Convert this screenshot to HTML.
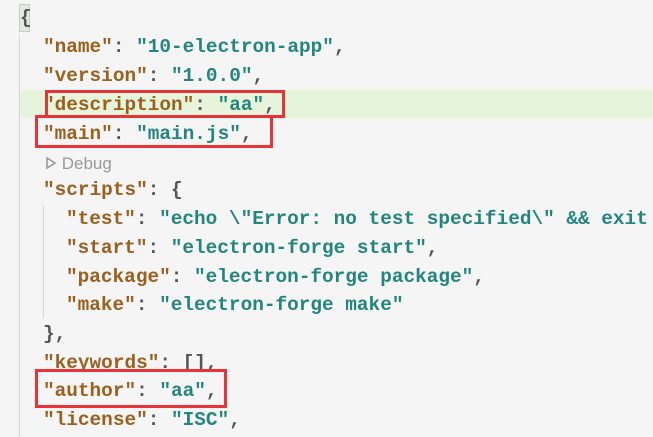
<!DOCTYPE html>
<html><head><style>
html,body{margin:0;padding:0;width:653px;height:437px;overflow:hidden;background:#f5f5f5;}
.code{position:absolute;left:0;top:0;font-family:"Liberation Mono",monospace;font-size:19.4px;font-weight:bold;white-space:pre;}
.l{position:absolute;height:29px;line-height:29px;margin-top:1px;}
.k{color:#9b5f1e}.s{color:#23867e}.p{color:#555}
.hl{position:absolute;left:20px;right:0;top:90px;height:28px;background:#e6f4dc;}
.box{position:absolute;border:3px solid #ea3338;box-sizing:border-box;}
.guide{position:absolute;width:1px;background:#d6d6d6;}
</style></head><body>
<div class="hl"></div>
<div class="guide" style="left:19px;top:35px;height:402px"></div>
<div class="guide" style="left:43px;top:205px;height:113px"></div>
<div style="position:absolute;left:19px;top:4px;width:11px;height:28px;background:#e4e8e4;border:1px solid #c8ccc8;box-sizing:border-box"></div>
<div class="code">
<div class="l p" style="left:20px;top:3px">{</div>
<div class="l" style="left:43px;top:32px"><span class="k">"name"</span><span class="p">: </span><span class="s">"10-electron-app"</span><span class="p">,</span></div>
<div class="l" style="left:43px;top:61px"><span class="k">"version"</span><span class="p">: </span><span class="s">"1.0.0"</span><span class="p">,</span></div>
<div class="l" style="left:43px;top:90px"><span class="k">"description"</span><span class="p">: </span><span class="s">"aa"</span><span class="p">,</span></div>
<div class="l" style="left:43px;top:119px"><span class="k">"main"</span><span class="p">: </span><span class="s">"main.js"</span><span class="p">,</span></div>
<div class="l" style="left:43px;top:175px"><span class="k">"scripts"</span><span class="p">: {</span></div>
<div class="l" style="left:66px;top:204px"><span class="k">"test"</span><span class="p">: </span><span class="s">"echo \"Error: no test specified\" &amp;&amp; exit 1"</span></div>
<div class="l" style="left:66px;top:233px"><span class="k">"start"</span><span class="p">: </span><span class="s">"electron-forge start"</span><span class="p">,</span></div>
<div class="l" style="left:66px;top:262px"><span class="k">"package"</span><span class="p">: </span><span class="s">"electron-forge package"</span><span class="p">,</span></div>
<div class="l" style="left:66px;top:290px"><span class="k">"make"</span><span class="p">: </span><span class="s">"electron-forge make"</span></div>
<div class="l p" style="left:43px;top:319px">},</div>
<div class="l" style="left:43px;top:348px"><span class="k">"keywords"</span><span class="p">: [],</span></div>
<div class="l" style="left:43px;top:376px"><span class="k">"author"</span><span class="p">: </span><span class="s">"aa"</span><span class="p">,</span></div>
<div class="l" style="left:43px;top:405px"><span class="k">"license"</span><span class="p">: </span><span class="s">"ISC"</span><span class="p">,</span></div>
</div>
<div style="position:absolute;left:45px;top:152px;font-family:'Liberation Sans',sans-serif;font-size:17px;color:#999;line-height:24px;">
<svg width="12" height="14" viewBox="0 0 12 14" style="vertical-align:-1px"><path d="M2 2 L10 7 L2 12 Z" fill="none" stroke="#999" stroke-width="1.6"/></svg> Debug</div>
<div class="box" style="left:45px;top:90px;width:240px;height:28px"></div>
<div class="box" style="left:35px;top:115px;width:238px;height:33px"></div>
<div class="box" style="left:35px;top:369px;width:192px;height:39px"></div>
</body></html>
